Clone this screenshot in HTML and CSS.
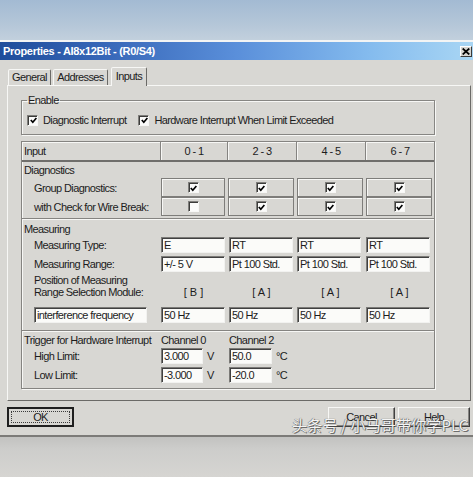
FILE: index.html
```html
<!DOCTYPE html>
<html>
<head>
<meta charset="utf-8">
<link rel="stylesheet" href="styles.css">
</head>
<body>
<div class="desk"></div>
<div class="window">
  <div class="titlebar">
    <span class="title">Properties - AI8x12Bit - (R0/S4)</span>
    <span class="close"><svg width="8" height="7" viewBox="0 0 8 7"><path d="M0.7 0.5 L7.3 6.5 M7.3 0.5 L0.7 6.5" stroke="#000" stroke-width="1.7"/></svg></span>
  </div>
  <div class="tabs">
    <div class="tab t-general">General</div>
    <div class="tab t-addr">Addresses</div>
    <div class="tab t-inputs active">Inputs</div>
  </div>
  <div class="panel">
    <fieldset class="group">
      <legend>Enable</legend>
      <div class="checks">
        <span class="chk"><span class="cb"><svg width="7" height="7" viewBox="0 0 7 7"><path d="M0.8 3 L2.8 5.2 L6.4 1" fill="none" stroke="#000" stroke-width="1.7"/></svg></span>Diagnostic Interrupt</span>
        <span class="chk"><span class="cb"><svg width="7" height="7" viewBox="0 0 7 7"><path d="M0.8 3 L2.8 5.2 L6.4 1" fill="none" stroke="#000" stroke-width="1.7"/></svg></span>Hardware Interrupt When Limit Exceeded</span>
      </div>
    </fieldset>
    <div class="table">
      <div class="grid head">
        <div class="hc first">Input</div>
        <div class="hc">0 - 1</div>
        <div class="hc">2 - 3</div>
        <div class="hc">4 - 5</div>
        <div class="hc">6 - 7</div>
      </div>
      <div class="section diag">
        <div class="sec-title">Diagnostics</div>
        <div class="grid row19">
          <div class="lbl">Group Diagnostics:</div>
          <div class="box"><span class="cb"><svg width="7" height="7" viewBox="0 0 7 7"><path d="M0.8 3 L2.8 5.2 L6.4 1" fill="none" stroke="#000" stroke-width="1.7"/></svg></span></div>
          <div class="box"><span class="cb"><svg width="7" height="7" viewBox="0 0 7 7"><path d="M0.8 3 L2.8 5.2 L6.4 1" fill="none" stroke="#000" stroke-width="1.7"/></svg></span></div>
          <div class="box"><span class="cb"><svg width="7" height="7" viewBox="0 0 7 7"><path d="M0.8 3 L2.8 5.2 L6.4 1" fill="none" stroke="#000" stroke-width="1.7"/></svg></span></div>
          <div class="box"><span class="cb"><svg width="7" height="7" viewBox="0 0 7 7"><path d="M0.8 3 L2.8 5.2 L6.4 1" fill="none" stroke="#000" stroke-width="1.7"/></svg></span></div>
        </div>
        <div class="grid row19">
          <div class="lbl">with Check for Wire Break:</div>
          <div class="box"><span class="cb"></span></div>
          <div class="box"><span class="cb"><svg width="7" height="7" viewBox="0 0 7 7"><path d="M0.8 3 L2.8 5.2 L6.4 1" fill="none" stroke="#000" stroke-width="1.7"/></svg></span></div>
          <div class="box"><span class="cb"><svg width="7" height="7" viewBox="0 0 7 7"><path d="M0.8 3 L2.8 5.2 L6.4 1" fill="none" stroke="#000" stroke-width="1.7"/></svg></span></div>
          <div class="box"><span class="cb"><svg width="7" height="7" viewBox="0 0 7 7"><path d="M0.8 3 L2.8 5.2 L6.4 1" fill="none" stroke="#000" stroke-width="1.7"/></svg></span></div>
        </div>
      </div>
      <div class="section meas">
        <div class="sec-title">Measuring</div>
        <div class="grid row16">
          <div class="lbl">Measuring Type:</div>
          <div class="field c1">E</div>
          <div class="field c2">RT</div>
          <div class="field c3">RT</div>
          <div class="field c4">RT</div>
        </div>
        <div class="grid row16 mt3">
          <div class="lbl">Measuring Range:</div>
          <div class="field c1">+/- 5 V</div>
          <div class="field c2">Pt 100 Std.</div>
          <div class="field c3">Pt 100 Std.</div>
          <div class="field c4">Pt 100 Std.</div>
        </div>
        <div class="grid pos">
          <div class="lbl two">Position of Measuring<br>Range Selection Module:</div>
          <div class="sel">[ B ]</div>
          <div class="sel">[ A ]</div>
          <div class="sel">[ A ]</div>
          <div class="sel">[ A ]</div>
        </div>
        <div class="grid row16 freq">
          <div class="lbl"><span class="field wide">interference frequency</span></div>
          <div class="field c1">50 Hz</div>
          <div class="field c2">50 Hz</div>
          <div class="field c3">50 Hz</div>
          <div class="field c4">50 Hz</div>
        </div>
      </div>
      <div class="section trig">
        <div class="grid row16">
          <div class="sec-title">Trigger for Hardware Interrupt</div>
          <div class="ch c1t">Channel 0</div>
          <div class="ch c2t">Channel 2</div>
        </div>
        <div class="grid row16">
          <div class="lbl">High Limit:</div>
          <div class="lim c1t"><span class="field small">3.000</span><span class="unit">V</span></div>
          <div class="lim c2t"><span class="field small2">50.0</span><span class="unit">°C</span></div>
        </div>
        <div class="grid row16 mt3">
          <div class="lbl">Low Limit:</div>
          <div class="lim c1t"><span class="field small">-3.000</span><span class="unit">V</span></div>
          <div class="lim c2t"><span class="field small2">-20.0</span><span class="unit">°C</span></div>
        </div>
      </div>
    </div>
  </div>
  <div class="buttons">
    <div class="btn ok"><span class="focus">OK</span></div>
    <div class="spacer"></div>
    <div class="btn">Cancel</div>
    <div class="btn help">Help</div>
  </div>
</div>
<div class="floor"></div>
<div class="watermark">头条号 / 小马哥带你学PLC</div>
</body>
</html>
```
FILE: styles.css
```css
* { box-sizing: border-box; }
html, body { margin: 0; padding: 0; }
body {
  width: 473px;
  height: 477px;
  overflow: hidden;
  position: relative;
  background: #d3d3d0;
  font-family: "Liberation Sans", Arial, sans-serif;
  font-size: 11px;
  letter-spacing: -0.6px;
  color: #1c1c1c;
}
.desk {
  height: 40px;
  background: linear-gradient(180deg, #a3bad3 0%, #b4c6d8 60%, #c2d0dd 100%);
}
.window {
  background: #d8d7d3;
  border-top: 2px solid #f3f4f4;
  border-bottom: 2px solid #7c7b78;
}
.titlebar {
  height: 18px;
  display: flex;
  align-items: center;
  justify-content: space-between;
  padding: 0 1px 0 3px;
  background: linear-gradient(90deg, #1f4d9b 0%, #3767b8 22%, #5a8fda 50%, #84bbee 78%, #a9d6f4 100%);
}
.title {
  color: #fff;
  font-weight: bold;
  font-size: 11px;
  letter-spacing: -0.3px;
}
.close {
  width: 12px;
  height: 11px;
  background: #d6d5d1;
  border: 1px solid;
  border-color: #fff #3a3a3a #3a3a3a #fff;
  display: flex;
  align-items: center;
  justify-content: center;
}
.tabs {
  display: flex;
  align-items: flex-end;
  height: 25px;
  padding-left: 8px;
  position: relative;
  z-index: 1;
}
.tab {
  height: 16px;
  border: 1px solid;
  border-bottom: none;
  border-color: #f7f7f5 #6b6a67 transparent #f7f7f5;
  border-radius: 2px 2px 0 0;
  text-align: center;
  line-height: 15px;
  background: #d8d7d3;
}
.t-general { width: 43px; margin-right: 2px; }
.t-addr { width: 55px; margin-right: 3px; }
.t-inputs { width: 36px; }
.tab.active {
  height: 19px;
  margin-bottom: -1px;
  line-height: 17px;
}
.panel {
  margin-left: 7px;
  width: 464px;
  height: 316px;
  border: 1px solid;
  border-color: #f7f7f5 #6b6a67 #6b6a67 #f7f7f5;
  padding: 0 0 0 13px;
}
fieldset.group {
  margin: 8px 0 0 0;
  width: 414px;
  min-width: 0;
  padding: 5px 5px 6px;
  border: 1px solid #878683;
  box-shadow: inset 1px 1px 0 #f7f7f5, 1px 1px 0 #f7f7f5;
}
legend {
  padding: 0 1px;
  line-height: 13px;
}
.checks {
  display: flex;
  align-items: center;
  height: 16px;
}
.chk {
  display: flex;
  align-items: center;
  gap: 5px;
}
.chk + .chk { margin-left: 12px; }
.cb {
  width: 11px;
  height: 11px;
  flex: none;
  background: #fbfbfa;
  border: 1px solid;
  border-color: #7f7e7b #f7f7f5 #f7f7f5 #7f7e7b;
  box-shadow: inset 1px 1px 0 #3c3c3a;
  display: flex;
  align-items: center;
  justify-content: center;
  padding: 1px 0 0 1px;
}
.table {
  margin-top: 6px;
  width: 414px;
  border: 1px solid #858481;
  box-shadow: inset 1px 1px 0 #f7f7f5, 1px 1px 0 #f7f7f5;
}
.grid {
  display: grid;
  grid-template-columns: 138px 67px 69px 69px 69px;
}
.head {
  height: 20px;
  border-bottom: 2px solid #6f6e6b;
}
.hc {
  display: flex;
  align-items: center;
  justify-content: center;
  border-left: 1px solid #858481;
  box-shadow: inset 1px 0 0 #f7f7f5;
}
.hc.first {
  justify-content: flex-start;
  padding-left: 2px;
  border-left: none;
  box-shadow: none;
}
.diag {
  padding: 1px 0 2px;
  border-bottom: 1px solid #858481;
}
.meas {
  border-top: 1px solid #f7f7f5;
  padding: 2px 0 7px;
  border-bottom: 1px solid #858481;
}
.trig {
  border-top: 1px solid #f7f7f5;
  padding: 0 0 5px;
}
.sec-title {
  height: 15px;
  line-height: 15px;
  padding-left: 2px;
  white-space: nowrap;
}
.trig .sec-title { height: 16px; line-height: 16px; }
.row19 { height: 19px; }
.row16 { height: 16px; }
.mt3 { margin-top: 3px; }
.lbl {
  padding-left: 12px;
  display: flex;
  align-items: center;
  white-space: nowrap;
}
.lbl.two {
  display: block;
  line-height: 12px;
}
.box {
  margin: 0 2px 0 1px;
  border: 1px solid #7e7d7a;
  box-shadow: inset 1px 1px 0 #f7f7f5;
  display: flex;
  align-items: center;
  justify-content: center;
}
.field {
  display: block;
  height: 16px;
  background: #fbfbf9;
  border: 1px solid;
  border-color: #7b7a77 #f2f2f0 #f2f2f0 #7b7a77;
  box-shadow: inset 1px 1px 0 #404040;
  padding-left: 2px;
  line-height: 14px;
  white-space: nowrap;
  overflow: hidden;
}
.c1 { margin-left: 1px; width: 64px; }
.c2 { margin-left: 2px; width: 64px; }
.c3 { margin-left: 1px; width: 64px; }
.c4 { margin-left: 1px; width: 64px; }
.pos {
  height: 24px;
  margin-top: 2px;
}
.sel {
  display: flex;
  align-items: flex-end;
  justify-content: center;
  line-height: 12px;
  letter-spacing: 0;
}
.freq { margin-top: 9px; }
.field.wide { width: 113px; }
.ch {
  line-height: 16px;
  white-space: nowrap;
}
.c1t { padding-left: 1px; }
.c2t { padding-left: 2px; }
.lim {
  display: flex;
  align-items: center;
  gap: 4px;
}
.field.small { width: 42px; }
.field.small2 { width: 43px; }
.unit { white-space: nowrap; }
.buttons {
  display: flex;
  height: 20px;
  margin-top: 6px;
  margin-bottom: 8px;
  padding: 0 3px 0 7px;
  gap: 3px;
}
.btn {
  width: 67px;
  display: flex;
  align-items: center;
  justify-content: center;
  border: 1px solid;
  border-color: #f7f7f5 #404040 #404040 #f7f7f5;
  box-shadow: inset -1px -1px 0 #868582;
}
.help { width: 72px; }
.spacer { flex: 1; }
.btn.ok {
  border: 2px solid #1f1f1f;
  box-shadow: none;
  padding: 2px;
}
.focus {
  flex: 1;
  align-self: stretch;
  display: flex;
  align-items: center;
  justify-content: center;
  border: 1px dotted #3a3a3a;
}
.floor {
  height: 40px;
  background: linear-gradient(180deg, #c2c2c0 0%, #cdcdcb 30%, #d6d5d2 100%);
}
.watermark {
  position: absolute;
  left: 292px;
  top: 415px;
  font-family: "Noto Sans CJK SC", "Liberation Sans", sans-serif;
  font-size: 15.2px;
  letter-spacing: 0;
  line-height: 18px;
  color: rgba(255, 255, 255, 0.95);
  text-shadow: 0 0 1px #444, 1px 1px 0 rgba(70, 70, 70, 0.7), -1px 0 0 rgba(120, 120, 120, 0.4);
  white-space: nowrap;
}
```
